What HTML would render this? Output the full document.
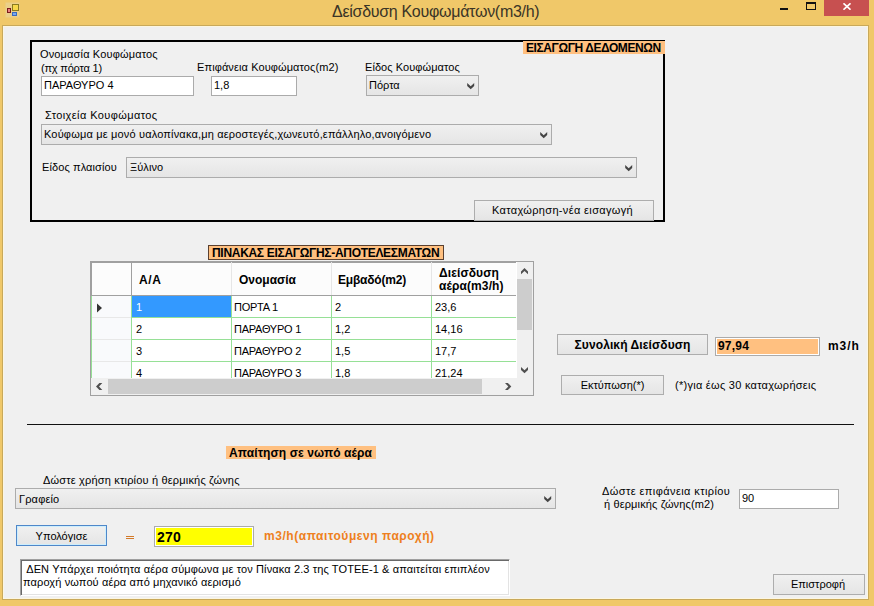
<!DOCTYPE html>
<html><head><meta charset="utf-8">
<style>
*{margin:0;padding:0;box-sizing:border-box}
html,body{width:874px;height:606px;overflow:hidden}
body{background:#F0C869;position:relative;font-family:"Liberation Sans",sans-serif;font-size:11px;color:#000}
.a{position:absolute}
.t{position:absolute;font-size:11px;line-height:13px;white-space:nowrap;color:#000}
.b{font-weight:bold}
#client{left:2px;top:25px;width:867px;height:575px;background:#F0F0F0;border:1px solid #c9a95a;box-shadow:inset 1px 1px 0 #fcf6e2,inset -1px -1px 0 #fcf6e2}
.tb{position:absolute;background:#fff;border:1px solid #ababab}
.cb{position:absolute;border:1px solid #acacac;background:linear-gradient(#f0f0f0,#e5e5e5)}
.cb svg{position:absolute;right:3px;top:7px}
.btn{position:absolute;border:1px solid #adadad;background:linear-gradient(#f0f0f0,#e5e5e5);text-align:center;line-height:18px;white-space:nowrap}
.org{background:#FFC080}
.h12{font-size:12px;line-height:14px}
</style></head><body>
<!-- title bar -->
<svg class="a" style="left:5px;top:2px" width="16" height="16" viewBox="0 0 16 16">
  <rect x="0.5" y="0.5" width="14" height="15" fill="#e8d6a0" opacity="0.6"/>
  <rect x="7.5" y="2.5" width="6" height="6" fill="#f7d84a" stroke="#8a7a20"/>
  <rect x="2.5" y="6.5" width="3" height="4" fill="#e88080" stroke="#7a1a1a"/>
  <rect x="7.5" y="10.5" width="4" height="3" fill="#78a8f0" stroke="#3a6ac0"/>
</svg>
<div class="t" style="left:332px;top:2px;font-size:16px;line-height:20px;color:#3a3426;letter-spacing:-0.28px">Δείσδυση Κουφωμάτων(m3/h)</div>
<div class="a" style="left:780px;top:8px;width:8px;height:2px;background:#111"></div>
<div class="a" style="left:806px;top:2px;width:10px;height:8px;border:1px solid #111;border-top-width:2px"></div>
<div class="a" style="left:824px;top:0;width:45px;height:16px;background:#C75050"></div>
<svg class="a" style="left:843px;top:3px" width="8" height="7" viewBox="0 0 8 7"><path d="M0.5 0.3L7.5 6.7M7.5 0.3L0.5 6.7" stroke="#fff" stroke-width="1.6"/></svg>

<div id="client" class="a"></div>

<!-- group box -->
<div class="a" style="left:30px;top:40px;width:635px;height:182px;border:2px solid #000"></div>
<div class="t b org" style="left:523px;top:41px;width:142px;height:13px;padding-left:3px;font-size:12px;line-height:15px;letter-spacing:-0.4px">ΕΙΣΑΓΩΓΗ ΔΕΔΟΜΕΝΩΝ</div>

<div class="t" style="left:40px;top:48px;letter-spacing:0.15px">Ονομασία Κουφώματος</div>
<div class="t" style="left:41px;top:62px;letter-spacing:-0.2px">(πχ πόρτα 1)</div>
<div class="tb" style="left:41px;top:76px;width:153px;height:20px"></div>
<div class="t" style="left:44px;top:79px">ΠΑΡΑΘΥΡΟ 4</div>

<div class="t" style="left:197px;top:61px;letter-spacing:0.1px">Επιφάνεια Κουφώματος(m2)</div>
<div class="tb" style="left:211px;top:76px;width:86px;height:20px"></div>
<div class="t" style="left:214px;top:79px">1,8</div>

<div class="t" style="left:365px;top:61px;letter-spacing:0.07px">Είδος Κουφώματος</div>
<div class="cb" style="left:366px;top:75px;width:113px;height:21px"><svg width="8" height="7" viewBox="0 0 8 7"><path d="M0.2 0L3.7 3.3L7.2 0L7.2 2.9L3.7 6.3L0.2 2.9Z" fill="#454545"/></svg></div>
<div class="t" style="left:369px;top:79px">Πόρτα</div>

<div class="t" style="left:45px;top:109px;letter-spacing:0.4px">Στοιχεία Κουφώματος</div>
<div class="cb" style="left:41px;top:124px;width:511px;height:21px"><svg width="8" height="7" viewBox="0 0 8 7"><path d="M0.2 0L3.7 3.3L7.2 0L7.2 2.9L3.7 6.3L0.2 2.9Z" fill="#454545"/></svg></div>
<div class="t" style="left:44px;top:128px;letter-spacing:0.17px">Κούφωμα με μονό υαλοπίνακα,μη αεροστεγές,χωνευτό,επάλληλο,ανοιγόμενο</div>

<div class="t" style="left:42px;top:161px;letter-spacing:0.1px">Είδος πλαισίου</div>
<div class="cb" style="left:126px;top:157px;width:511px;height:21px"><svg width="8" height="7" viewBox="0 0 8 7"><path d="M0.2 0L3.7 3.3L7.2 0L7.2 2.9L3.7 6.3L0.2 2.9Z" fill="#454545"/></svg></div>
<div class="t" style="left:130px;top:161px;letter-spacing:0.1px">Ξύλινο</div>

<div class="btn" style="left:474px;top:200px;width:180px;height:21px;letter-spacing:0.35px;padding-right:3px">Καταχώρηση-νέα εισαγωγή</div>

<!-- grid label -->
<div class="t b org" style="left:208px;top:245px;width:236px;height:15px;border:1px solid #5a4030;padding-left:3px;font-size:12px;line-height:14px;letter-spacing:-0.3px">ΠΙΝΑΚΑΣ ΕΙΣΑΓΩΓΗΣ-ΑΠΟΤΕΛΕΣΜΑΤΩΝ</div>


<!-- grid -->
<div class="a" style="left:90px;top:261px;width:444px;height:135px;border:1px solid #a0a0a0;background:#fff"></div>
<!-- header -->
<div class="a" style="left:91px;top:262px;width:425px;height:33px;background:#fcfcfc"></div>
<div class="a" style="left:91px;top:295px;width:425px;height:1px;background:#a0a0a0"></div>
<div class="a" style="left:91px;top:262px;width:425px;height:1px;background:#a0a0a0"></div>
<div class="a" style="left:91px;top:262px;width:1px;height:33px;background:#a0a0a0"></div>
<div class="a" style="left:131px;top:262px;width:1px;height:33px;background:#a0a0a0"></div>
<div class="a" style="left:231px;top:262px;width:1px;height:33px;background:#e6e6e6"></div>
<div class="a" style="left:331px;top:262px;width:1px;height:33px;background:#e6e6e6"></div>
<div class="a" style="left:431px;top:262px;width:1px;height:33px;background:#e6e6e6"></div>
<div class="t b h12" style="left:139px;top:273px;letter-spacing:0.6px">A/A</div>
<div class="t b h12" style="left:239px;top:273px">Ονομασία</div>
<div class="t b h12" style="left:338px;top:273px;letter-spacing:-0.2px">Εμβαδό(m2)</div>
<div class="t b h12" style="left:439px;top:267px;line-height:13px;letter-spacing:0.1px">Διείσδυση<br>αέρα(m3/h)</div>
<!-- rows area -->
<div class="a" style="left:91px;top:296px;width:40px;height:82px;background:#f9fafc"></div>
<div class="a" style="left:91px;top:296px;width:1px;height:82px;background:#96e096"></div>
<div class="a" style="left:131px;top:296px;width:1px;height:82px;background:#96e096"></div>
<div class="a" style="left:231px;top:296px;width:1px;height:82px;background:#96e096"></div>
<div class="a" style="left:331px;top:296px;width:1px;height:82px;background:#96e096"></div>
<div class="a" style="left:431px;top:296px;width:1px;height:82px;background:#96e096"></div>
<div class="a" style="left:92px;top:317px;width:39px;height:1px;background:#e8e8e8"></div>
<div class="a" style="left:92px;top:339px;width:39px;height:1px;background:#e8e8e8"></div>
<div class="a" style="left:92px;top:361px;width:39px;height:1px;background:#e8e8e8"></div>
<div class="a" style="left:132px;top:317px;width:384px;height:1px;background:#96e096"></div>
<div class="a" style="left:132px;top:339px;width:384px;height:1px;background:#96e096"></div>
<div class="a" style="left:132px;top:361px;width:384px;height:1px;background:#96e096"></div>
<div class="a" style="left:132px;top:296px;width:99px;height:21px;background:#3399ff"></div>
<svg class="a" style="left:96px;top:303px" width="7" height="10" viewBox="0 0 7 10"><path d="M1 0.5L6 5L1 9.5Z" fill="#333"/></svg>
<div class="t" style="left:136px;top:301px;color:#fff">1</div>
<div class="t" style="left:234px;top:301px;letter-spacing:-0.25px">ΠΟΡΤΑ 1</div>
<div class="t" style="left:335px;top:301px">2</div>
<div class="t" style="left:435px;top:301px">23,6</div>
<div class="t" style="left:136px;top:323px">2</div>
<div class="t" style="left:234px;top:323px;letter-spacing:-0.25px">ΠΑΡΑΘΥΡΟ 1</div>
<div class="t" style="left:335px;top:323px">1,2</div>
<div class="t" style="left:435px;top:323px">14,16</div>
<div class="t" style="left:136px;top:345px">3</div>
<div class="t" style="left:234px;top:345px;letter-spacing:-0.25px">ΠΑΡΑΘΥΡΟ 2</div>
<div class="t" style="left:335px;top:345px">1,5</div>
<div class="t" style="left:435px;top:345px">17,7</div>
<div class="a" style="left:91px;top:362px;width:425px;height:16px;overflow:hidden">
 <div class="t" style="left:45px;top:5px">4</div>
 <div class="t" style="left:143px;top:5px;letter-spacing:-0.25px">ΠΑΡΑΘΥΡΟ 3</div>
 <div class="t" style="left:244px;top:5px">1,8</div>
 <div class="t" style="left:344px;top:5px">21,24</div>
</div>
<!-- v scrollbar -->
<div class="a" style="left:517px;top:262px;width:16px;height:116px;background:#f0f0f0"></div>
<div class="a" style="left:517px;top:279px;width:15px;height:51px;background:#cdcdcd"></div>
<svg class="a" style="left:521px;top:268px" width="8" height="7" viewBox="0 0 8 7"><path d="M0 6.3L3.5 3L7 6.3L7 3.4L3.5 0L0 3.4Z" fill="#505050"/></svg>
<svg class="a" style="left:521px;top:367px" width="8" height="7" viewBox="0 0 8 7"><path d="M0 0L3.5 3.3L7 0L7 2.9L3.5 6.3L0 2.9Z" fill="#505050"/></svg>
<!-- h scrollbar -->
<div class="a" style="left:91px;top:378px;width:442px;height:17px;background:#f0f0f0"></div>
<div class="a" style="left:108px;top:379px;width:374px;height:15px;background:#cdcdcd"></div>
<svg class="a" style="left:96px;top:383px" width="7" height="8" viewBox="0 0 7 8"><path d="M6.3 0L3 3.5L6.3 7L3.4 7L0 3.5L3.4 0Z" fill="#505050"/></svg>
<svg class="a" style="left:505px;top:383px" width="7" height="8" viewBox="0 0 7 8"><path d="M0 0L3.3 3.5L0 7L2.9 7L6.3 3.5L2.9 0Z" fill="#505050"/></svg>

<!-- right panel -->
<div class="btn b" style="left:557px;top:334px;width:151px;height:21px;font-size:12px;letter-spacing:0.1px;line-height:20px">Συνολική Διείσδυση</div>
<div class="tb org" style="left:715px;top:337px;width:105px;height:19px;box-shadow:inset 0 0 0 1px #fff"></div>
<div class="t b h12" style="left:718px;top:339px;letter-spacing:0.2px">97,94</div>
<div class="t b h12" style="left:828px;top:339px;letter-spacing:0.9px">m3/h</div>
<div class="btn" style="left:561px;top:375px;width:103px;height:20px">Εκτύπωση(*)</div>
<div class="t" style="left:675px;top:379px;letter-spacing:0.27px">(*)για έως 30 καταχωρήσεις</div>

<!-- separator -->
<div class="a" style="left:27px;top:424px;width:827px;height:1px;background:#111"></div>

<div class="t b org" style="left:226px;top:446px;width:150px;height:13px;padding-left:3px;font-size:12px;line-height:15px;letter-spacing:0.1px">Απαίτηση σε νωπό αέρα</div>
<div class="t" style="left:43px;top:474px;letter-spacing:0.18px">Δώστε χρήση κτιρίου ή θερμικής ζώνης</div>
<div class="cb" style="left:15px;top:488px;width:541px;height:21px"><svg width="8" height="7" viewBox="0 0 8 7"><path d="M0.2 0L3.7 3.3L7.2 0L7.2 2.9L3.7 6.3L0.2 2.9Z" fill="#454545"/></svg></div>
<div class="t" style="left:19px;top:493px;letter-spacing:0.15px">Γραφείο</div>

<div class="t" style="left:602px;top:485px;letter-spacing:0.41px">Δώστε επιφάνεια κτιρίου</div>
<div class="t" style="left:604px;top:498px;letter-spacing:0.13px">ή θερμικής ζώνης(m2)</div>
<div class="tb" style="left:739px;top:489px;width:100px;height:20px"></div>
<div class="t" style="left:742px;top:492px">90</div>

<div class="btn" style="left:16px;top:525px;width:91px;height:21px;border-color:#4f87c9;box-shadow:inset 0 0 0 1px #cdeefd;line-height:20px">Υπολόγισε</div>
<div class="a" style="left:126px;top:536px;width:8px;height:1px;background:#d27a2a"></div><div class="a" style="left:126px;top:538px;width:8px;height:1px;background:#d27a2a"></div>
<div class="tb" style="left:154px;top:526px;width:100px;height:21px;background:#ffff00;box-shadow:inset 0 0 0 1px #fff"></div>
<div class="t b" style="left:157px;top:529px;font-size:14px;line-height:16px;letter-spacing:0.2px">270</div>
<div class="t b h12" style="left:264px;top:529px;color:#ee8020;letter-spacing:0.55px">m3/h(απαιτούμενη παροχή)</div>

<div class="a" style="left:20px;top:559px;width:490px;height:37px;background:#fff;border-top:1px solid #a0a0a0;border-left:1px solid #a0a0a0;border-right:1px solid #fff;border-bottom:1px solid #fff;box-shadow:inset 1px 1px 0 #696969,inset -1px -1px 0 #e3e3e3"></div>
<div class="t" style="left:23px;top:563px;line-height:13px;letter-spacing:0.12px">&nbsp;ΔΕΝ Υπάρχει ποιότητα αέρα σύμφωνα με τον Πίνακα 2.3 της ΤΟΤΕΕ-1 &amp; απαιτείται επιπλέον<br>παροχή νωπού αέρα από μηχανικό αερισμό</div>

<div class="btn" style="left:773px;top:574px;width:92px;height:21px;padding-right:2px;line-height:19px">Επιστροφή</div>
</body></html>
